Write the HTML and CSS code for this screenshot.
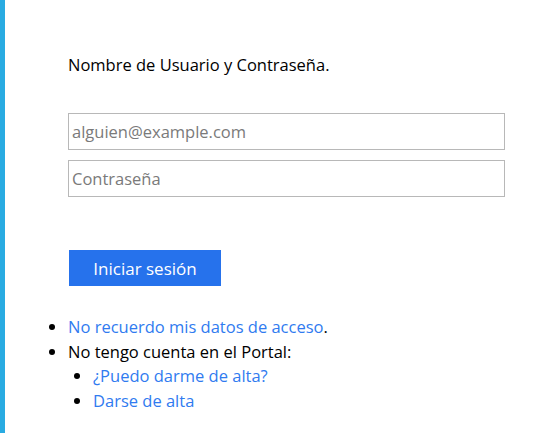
FILE: index.html
```html
<!DOCTYPE html>
<html lang="es">
<head>
<meta charset="utf-8">
<title>Inicio de sesión</title>
<link rel="stylesheet" href="styles.css">
</head>
<body>
<div class="page">
  <main class="content">
    <p class="intro">Nombre de Usuario y Contraseña.</p>
    <form class="login-form">
      <input class="field" type="email" placeholder="alguien@example.com">
      <input class="field" type="password" placeholder="Contraseña">
      <button class="submit" type="button">Iniciar sesión</button>
    </form>
    <ul class="links">
      <li><a href="#">No recuerdo mis datos de acceso</a>.</li>
      <li>No tengo cuenta en el Portal:
        <ul class="sublinks">
          <li><a href="#">¿Puedo darme de alta?</a></li>
          <li><a href="#">Darse de alta</a></li>
        </ul>
      </li>
    </ul>
  </main>
</div>
</body>
</html>
```
FILE: styles.css
```css
html, body {
  margin: 0;
  padding: 0;
  background: #ffffff;
}
body {
  font-family: "Open Sans", "Noto Sans", "Liberation Sans", sans-serif;
  font-size: 16.5px;
  color: #000000;
}
.page {
  border-left: 5px solid #29abe2;
  min-height: 433px;
  box-sizing: border-box;
}
.content {
  padding: 53px 0 0 63px;
}
.intro {
  margin: 0;
  line-height: 24px;
}
.login-form {
  display: flex;
  flex-direction: column;
  align-items: flex-start;
  margin-top: 36px;
}
.field {
  box-sizing: border-box;
  width: 437px;
  height: 37px;
  margin: 0 0 10px 0;
  padding: 0 3px;
  border: 1px solid #b8b8b8;
  border-radius: 0;
  font-family: inherit;
  font-size: 16.5px;
  color: #000;
  outline: none;
}
.field::placeholder {
  color: #7a7a7a;
}
.submit {
  margin: 43px 0 0 1px;
  width: 152px;
  height: 36px;
  background: #2672ec;
  border: none;
  border-radius: 0;
  color: #ffffff;
  font-family: inherit;
  font-size: 17px;
  padding: 0;
}
.links {
  margin: 29px 0 0 0;
  padding: 0;
  line-height: 24.6px;
}
.sublinks {
  margin: 0;
  padding-left: 25px;
  list-style-type: disc;
}
a {
  color: #307bf0;
  text-decoration: none;
}
```
